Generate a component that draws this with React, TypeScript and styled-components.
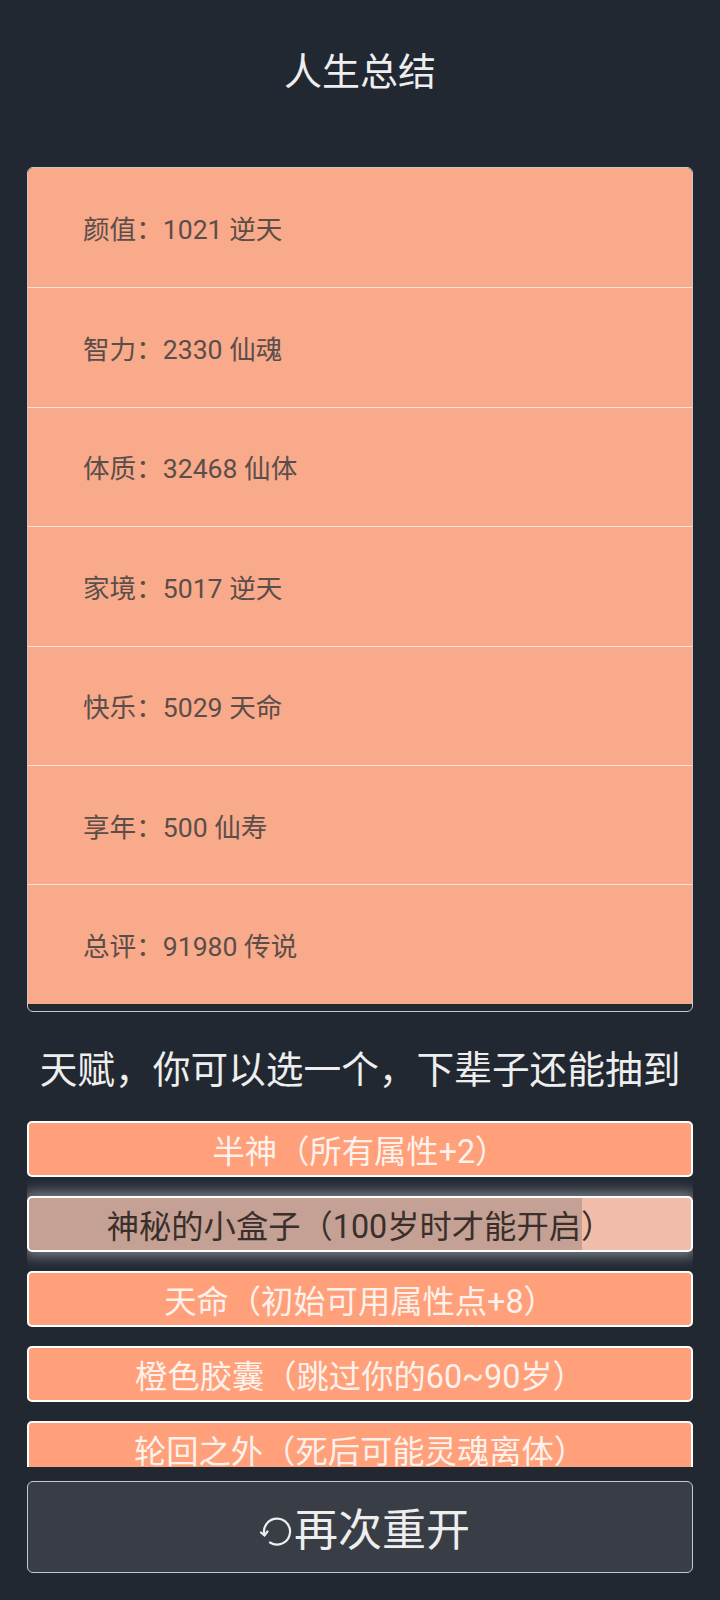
import styled, { createGlobalStyle } from "styled-components";

const GlobalStyle = createGlobalStyle`
  html, body {
    margin: 0;
    padding: 0;
    background: #222831;
  }
  body {
    font-family: Roboto, "Noto Sans CJK SC", sans-serif;
    color: #eeeeee;
  }
  * {
    box-sizing: border-box;
  }
`;

const Page = styled.div`
  display: flex;
  flex-direction: column;
  width: 720px;
  padding: 44px 27px 28px 27px;
  background: #222831;
`;

const Title = styled.h1`
  margin: 0;
  height: 56px;
  line-height: 56px;
  font-size: 38px;
  font-weight: 400;
  text-align: center;
  color: #eeeeee;
`;

const SummaryPanel = styled.div`
  display: flex;
  flex-direction: column;
  margin-top: 67px;
  padding-bottom: 7px;
  border: 1px solid #c8c8cc;
  border-radius: 6px;
  overflow: hidden;
`;

const SummaryRow = styled.div`
  display: flex;
  align-items: center;
  height: 119.4px;
  padding-left: 55px;
  background: #f8aa8a;
  color: #5b4e4a;
  font-size: 26.6px;
  border-top: 1px solid #fbe3d9;

  &:first-child {
    border-top: none;
  }
`;

const Heading = styled.h2`
  margin: 30px 0 0 0;
  height: 56px;
  line-height: 56px;
  font-size: 37.7px;
  font-weight: 400;
  text-align: center;
  color: #eeeeee;
  white-space: nowrap;
`;

const TalentList = styled.div`
  display: flex;
  flex-direction: column;
  gap: 19px;
  height: 369px;
  padding-top: 23px;
  overflow: hidden;
`;

const TalentButton = styled.div<{ $selected?: boolean }>`
  flex-shrink: 0;
  display: flex;
  align-items: center;
  justify-content: center;
  height: 56px;
  border: 2px solid #ffffff;
  border-radius: 5px;
  font-size: 32.3px;
  white-space: nowrap;
  color: ${(p) => (p.$selected ? "#3a2f2b" : "#fdf1ec")};
  background: ${(p) =>
    p.$selected
      ? "linear-gradient(to right, #c4a194 0, #c4a194 83.5%, #f0bdaa 83.5%, #f0bdaa 100%)"
      : "#ffa07a"};
  box-shadow: ${(p) =>
    p.$selected ? "0 0 14px 4px rgba(220, 224, 232, 0.5)" : "none"};
`;

const RestartButton = styled.button`
  display: flex;
  align-items: center;
  justify-content: center;
  margin-top: 14px;
  height: 92px;
  width: 100%;
  background: #393e46;
  border: 1px solid #c8c8cc;
  border-radius: 6px;
  color: #eeeeee;
  font-family: Roboto, "Noto Sans CJK SC", sans-serif;
  font-size: 44px;
  padding: 0 0 0 8px;
`;

const RestartIcon = styled.svg`
  width: 34px;
  height: 34px;
  margin-right: 2px;
  margin-top: 6px;
`;

const summary = [
  "颜值：1021 逆天",
  "智力：2330 仙魂",
  "体质：32468 仙体",
  "家境：5017 逆天",
  "快乐：5029 天命",
  "享年：500 仙寿",
  "总评：91980 传说",
];

const talents = [
  "半神（所有属性+2）",
  "神秘的小盒子（100岁时才能开启）",
  "天命（初始可用属性点+8）",
  "橙色胶囊（跳过你的60~90岁）",
  "轮回之外（死后可能灵魂离体）",
];

export default function App() {
  return (
    <>
      <GlobalStyle />
      <Page>
        <Title>人生总结</Title>
        <SummaryPanel>
          {summary.map((s) => (
            <SummaryRow key={s}>{s}</SummaryRow>
          ))}
        </SummaryPanel>
        <Heading>天赋，你可以选一个，下辈子还能抽到</Heading>
        <TalentList>
          {talents.map((t, i) => (
            <TalentButton key={t} $selected={i === 1}>
              {t}
            </TalentButton>
          ))}
        </TalentList>
        <RestartButton>
          <RestartIcon viewBox="0 0 34 34" fill="none" stroke="#eeeeee" strokeWidth="2.2" strokeLinecap="round">
            <path d="M6.5 22 A13 13 0 1 1 12 29.5" />
            <path d="M3 19.5 L6.5 22.5 L9.5 18.5" />
          </RestartIcon>
          再次重开
        </RestartButton>
      </Page>
    </>
  );
}
